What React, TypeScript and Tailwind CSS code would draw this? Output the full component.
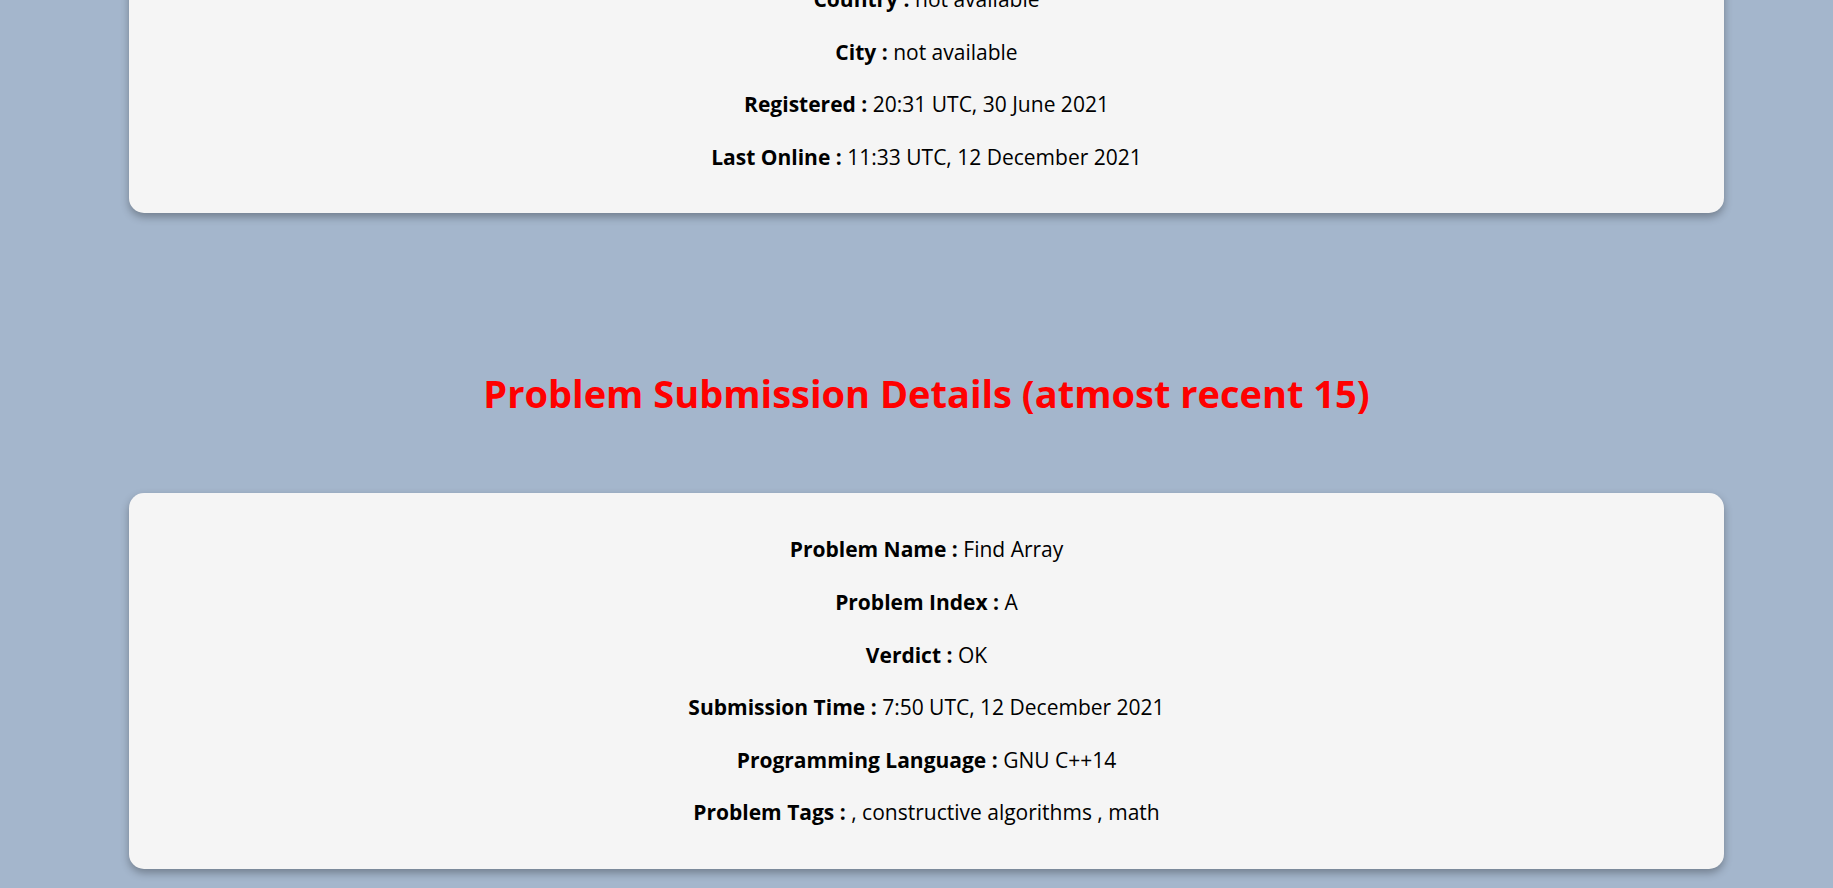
import React from "react";

const profile = [
  { label: "Country", value: "not available" },
  { label: "City", value: "not available" },
  { label: "Registered", value: "20:31 UTC, 30 June 2021" },
  { label: "Last Online", value: "11:33 UTC, 12 December 2021" },
];

const submissions = [
  {
    name: "Find Array",
    index: "A",
    verdict: "OK",
    time: "7:50 UTC, 12 December 2021",
    lang: "GNU C++14",
    tags: ", constructive algorithms , math",
  },
];

function Row({ label, value }: { label: string; value: string }) {
  return (
    <p className="leading-[52.6px] text-[21px] text-black whitespace-nowrap">
      <b className="font-bold">{label} :</b> {value}
    </p>
  );
}

function Card({ children, className = "" }: { children: React.ReactNode; className?: string }) {
  return (
    <div
      className={`mx-auto w-[1595px] rounded-[15px] bg-[#f5f5f5] pt-[30px] pb-[30px] text-center shadow-[0_4px_8px_rgba(0,0,0,0.3)] ${className}`}
    >
      {children}
    </div>
  );
}

export default function App() {
  return (
    <div
      className="min-h-screen bg-[#a4b6cc] pl-[20px] pb-[40px] overflow-hidden"
      style={{ fontFamily: '"Open Sans", "Noto Sans", sans-serif' }}
    >
      {/* user info card, scrolled partly out of view */}
      <Card className="-mt-[57px]">
        {profile.map((r) => (
          <Row key={r.label} label={r.label} value={r.value} />
        ))}
      </Card>

      <h1 className="mt-[155px] mb-[75px] text-center text-[38px] leading-[50px] font-bold text-[#ff0000]">
        Problem Submission Details (atmost recent 15)
      </h1>

      {submissions.map((s, i) => (
        <Card key={i}>
          <Row label="Problem Name" value={s.name} />
          <Row label="Problem Index" value={s.index} />
          <Row label="Verdict" value={s.verdict} />
          <Row label="Submission Time" value={s.time} />
          <Row label="Programming Language" value={s.lang} />
          <Row label="Problem Tags" value={s.tags} />
        </Card>
      ))}
    </div>
  );
}
